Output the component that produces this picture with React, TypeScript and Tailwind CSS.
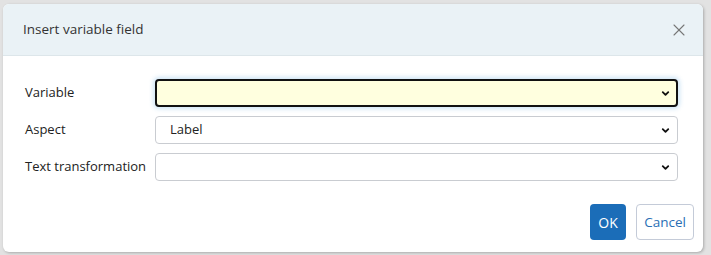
import { X, ChevronDown } from 'lucide-react'

const rows = [
  { label: 'Variable', value: '', focused: true },
  { label: 'Aspect', value: 'Label', focused: false },
  { label: 'Text transformation', value: '', focused: false },
]

function SelectBox({ value, focused }: { value: string; focused: boolean }) {
  return (
    <div
      className={
        focused
          ? 'flex h-[28px] flex-1 items-center justify-between rounded-[4px] border-2 border-[#111] bg-[#ffffdf] pl-[13px] pr-[5px] shadow-[0_0_4px_2px_rgba(150,200,235,0.45)]'
          : 'flex h-[28px] flex-1 items-center justify-between rounded-[4px] border border-[#c9ccd1] bg-white pl-[14px] pr-[6px]'
      }
    >
      <span className="text-[13px] text-[#222]">{value}</span>
      <ChevronDown size={11} strokeWidth={4} className="text-[#111]" />
    </div>
  )
}

export default function App() {
  return (
    <div className="h-[255px] w-[711px] bg-[#e2e2e2] pl-[3px] pt-[4px] font-['Open_Sans',sans-serif]">
      <div className="flex h-[248px] w-[700px] flex-col overflow-hidden rounded-[6px] bg-white shadow-[1px_1px_3px_rgba(0,0,0,0.25)]">
        <div className="flex h-[52px] items-center justify-between border-b border-[#dde6ea] bg-[#eaf2f6] pl-[20px] pr-[14px]">
          <span className="text-[13.5px] text-[#333]">Insert variable field</span>
          <X size={20} strokeWidth={1.3} className="text-[#777]" />
        </div>
        <div className="flex flex-col gap-[9px] pl-[22px] pr-[25px] pt-[23px]">
          {rows.map((r) => (
            <div key={r.label} className="flex items-center">
              <span className="w-[130px] text-[13px] text-[#222]">{r.label}</span>
              <SelectBox value={r.value} focused={r.focused} />
            </div>
          ))}
        </div>
        <div className="mt-auto flex justify-end gap-[10px] pb-[12px] pr-[9px]">
          <button className="h-[36px] w-[36px] rounded-[4px] bg-[#1b6db8] text-[14px] text-white">OK</button>
          <button className="h-[36px] w-[58px] rounded-[4px] border border-[#c4cbd8] bg-white text-[13.5px] text-[#2a6fb5]">
            Cancel
          </button>
        </div>
      </div>
    </div>
  )
}
